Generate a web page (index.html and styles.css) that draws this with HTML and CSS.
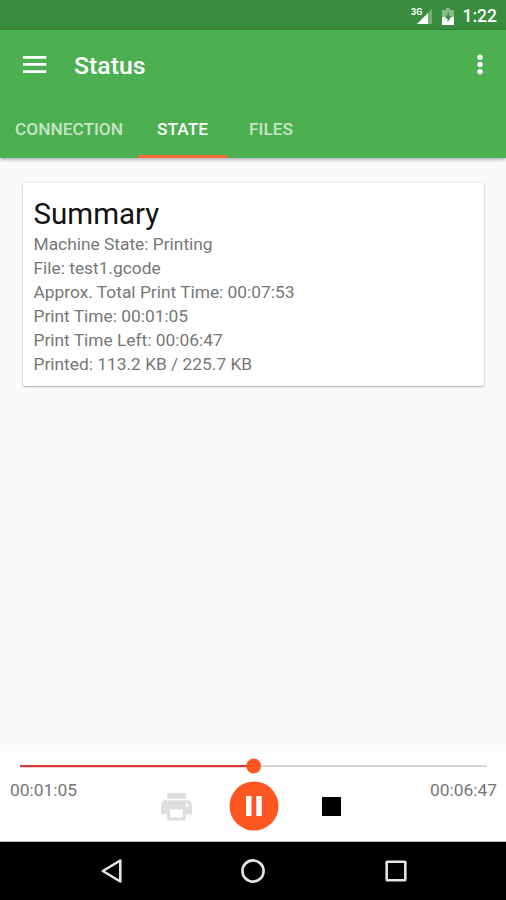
FILE: index.html
```html
<!DOCTYPE html>
<html lang="en">
<head>
<meta charset="utf-8">
<title>Status</title>
<link rel="stylesheet" href="styles.css">
</head>
<body>
<div class="statusbar">
  <svg class="signal" width="22" height="19" viewBox="0 0 22 19"><path d="M21 2v15H6z" fill="#fff" opacity=".3"/><path d="M17 6V17H6z" fill="#fff"/><text class="net" x="0" y="7.500">3G</text></svg>
  <svg class="battery" width="12" height="17" viewBox="0 0 12 17"><path d="M4 0h4v2h4v15H0V2h4z" fill="#fff" opacity=".4"/><path d="M0 9h12v8H0z" fill="#fff"/><path d="M7 4 3 10.500h2.500v4l4-6.500H7z" fill="#388e3c"/></svg>
  <span class="clock">1:22</span>
</div>
<header class="appbar">
  <div class="toolbar">
    <svg class="menu" width="24" height="17" viewBox="0 0 24 17"><path d="M0 0h23.300v2.700H0zM0 7.100h23.300v2.700H0zM0 14.200h23.300v2.700H0z" fill="#fff"/></svg>
    <h1 class="title">Status</h1>
    <svg class="more" width="6" height="21" viewBox="0 0 6 21"><g fill="#fff"><circle cx="3" cy="3.200" r="2.700"/><circle cx="3" cy="10.500" r="2.700"/><circle cx="3" cy="17.800" r="2.700"/></g></svg>
  </div>
  <nav class="tabs">
    <span class="tab tab-connection">CONNECTION</span>
    <span class="tab tab-state active">STATE</span>
    <span class="tab tab-files">FILES</span>
  </nav>
</header>
<main class="content">
  <section class="card">
    <h2 class="heading">Summary</h2>
    <p>Machine State: Printing</p>
    <p>File: test1.gcode</p>
    <p>Approx. Total Print Time: 00:07:53</p>
    <p>Print Time: 00:01:05</p>
    <p>Print Time Left: 00:06:47</p>
    <p>Printed: 113.2 KB / 225.7 KB</p>
  </section>
</main>
<footer class="player">
  <svg class="seek" width="468" height="16" viewBox="0 0 468 16"><path d="M233 7.200h234v1.800H233z" fill="#d2d2d2"/><path d="M0 7h233v2.200H0z" fill="#d83a35"/><circle cx="233.700" cy="8" r="7.400" fill="#ff5722"/></svg>
  <div class="controls">
    <span class="time">00:01:05</span>
    <div class="buttons">
      <svg class="print" width="37" height="37" viewBox="0 0 24 24"><path fill="#dedede" d="M19 8H5c-1.660 0-3 1.340-3 3v6h4v4h12v-4h4v-6c0-1.660-1.340-3-3-3zm-3 11H8v-5h8v5zm3-7c-.55 0-1-.45-1-1s.45-1 1-1 1 .45 1 1-.45 1-1 1zm-1-9H6v4h12V3z"/></svg>
      <svg class="pause" width="50" height="50" viewBox="0 0 50 50"><circle cx="25" cy="25" r="24.500" fill="#ff5722"/><path d="M17 15h5.500v20H17zM27.300 15h5.500v20h-5.500z" fill="#fff"/></svg>
      <svg class="stop" width="19" height="19" viewBox="0 0 19 19"><path d="M0 0h19v19H0z"/></svg>
    </div>
    <span class="time">00:06:47</span>
  </div>
</footer>
<nav class="navbar">
  <svg width="24" height="26" viewBox="0 0 24 26"><path d="M20.300 2.500v21L2.800 13z"/></svg>
  <svg class="home" width="26" height="26" viewBox="0 0 26 26"><circle cx="13" cy="13" r="10.600"/></svg>
  <svg width="22" height="22" viewBox="0 0 22 22"><rect x="1.700" y="1.700" width="18.600" height="18.600" rx=".5"/></svg>
</nav>
</body>
</html>
```
FILE: styles.css
```css
* { box-sizing: border-box; margin: 0; }
body {
  width: 506px;
  height: 900px;
  display: flex;
  flex-direction: column;
  overflow: hidden;
  background: #fafafa;
  font-family: Roboto, sans-serif;
}
svg { display: block; flex: none; }
.statusbar {
  height: 30px;
  flex: none;
  display: flex;
  align-items: center;
  justify-content: flex-end;
  padding: 2px 9px 0 0;
  background: #388e3c;
  color: #fff;
}
.signal { margin-right: 9px; }
.net { font-size: 9px; font-weight: 700; fill: #fff; }
.battery { margin-right: 9px; }
.clock { font-size: 17.5px; font-weight: 500; }
.appbar {
  height: 128px;
  flex: none;
  display: flex;
  flex-direction: column;
  justify-content: space-between;
  background: #4caf50;
  color: #fff;
  box-shadow: 0 1px 4px rgba(0, 0, 0, .4);
}
.toolbar {
  height: 69px;
  display: flex;
  align-items: center;
  padding: 0 23px;
}
.title { margin-left: 27px; font-size: 24.8px; font-weight: 500; line-height: 30px; padding-top: 3px; }
.more { margin-left: auto; }
.tabs { display: flex; height: 58px; }
.tab {
  display: flex;
  justify-content: center;
  align-items: center;
  padding-top: 2px;
  font-size: 17.3px;
  font-weight: 500;
  color: rgba(255, 255, 255, .7);
  border-bottom: 3px solid transparent;
}
.tab-connection { width: 138px; }
.tab-state { width: 89px; }
.tab-files { width: 88px; }
.active { color: #fff; border-bottom-color: #ff6b35; }
.content { flex: 1; padding: 25px 22px 0 23px; }
.card {
  height: 203px;
  padding: 12px 10.5px;
  border-radius: 2px;
  background: #fff;
  box-shadow: 0 1px 2px rgba(0, 0, 0, .3), 0 0 2px rgba(0, 0, 0, .12);
}
.heading { font-size: 29.5px; font-weight: 400; line-height: 38px; color: #111; }
.card p { font-size: 17.35px; line-height: 23.95px; color: #777; }
.player {
  height: 91px;
  flex: none;
  background: #fff;
  border-bottom: 1px solid #bbb;
  padding-top: 7px;
}
.seek { margin-left: 20px; }
.controls { display: flex; justify-content: space-between; padding: 0 9px 0 10px; }
.time { font-size: 17.4px; line-height: 20px; padding-top: 6px; color: #777; }
.buttons { display: flex; align-items: center; height: 50px; margin-top: 7px; }
.print { margin-left: -9px; }
.pause { margin: 0 43px 0 34px; }
.navbar {
  height: 58px;
  flex: none;
  display: flex;
  align-items: center;
  justify-content: space-between;
  padding: 0 99px 0 100px;
  background: #000;
}
.navbar svg { fill: none; stroke: #e4e4e4; stroke-width: 2.6; stroke-linejoin: round; }
.navbar .home { margin: 0 1.5px 0 -1.5px; }
```
